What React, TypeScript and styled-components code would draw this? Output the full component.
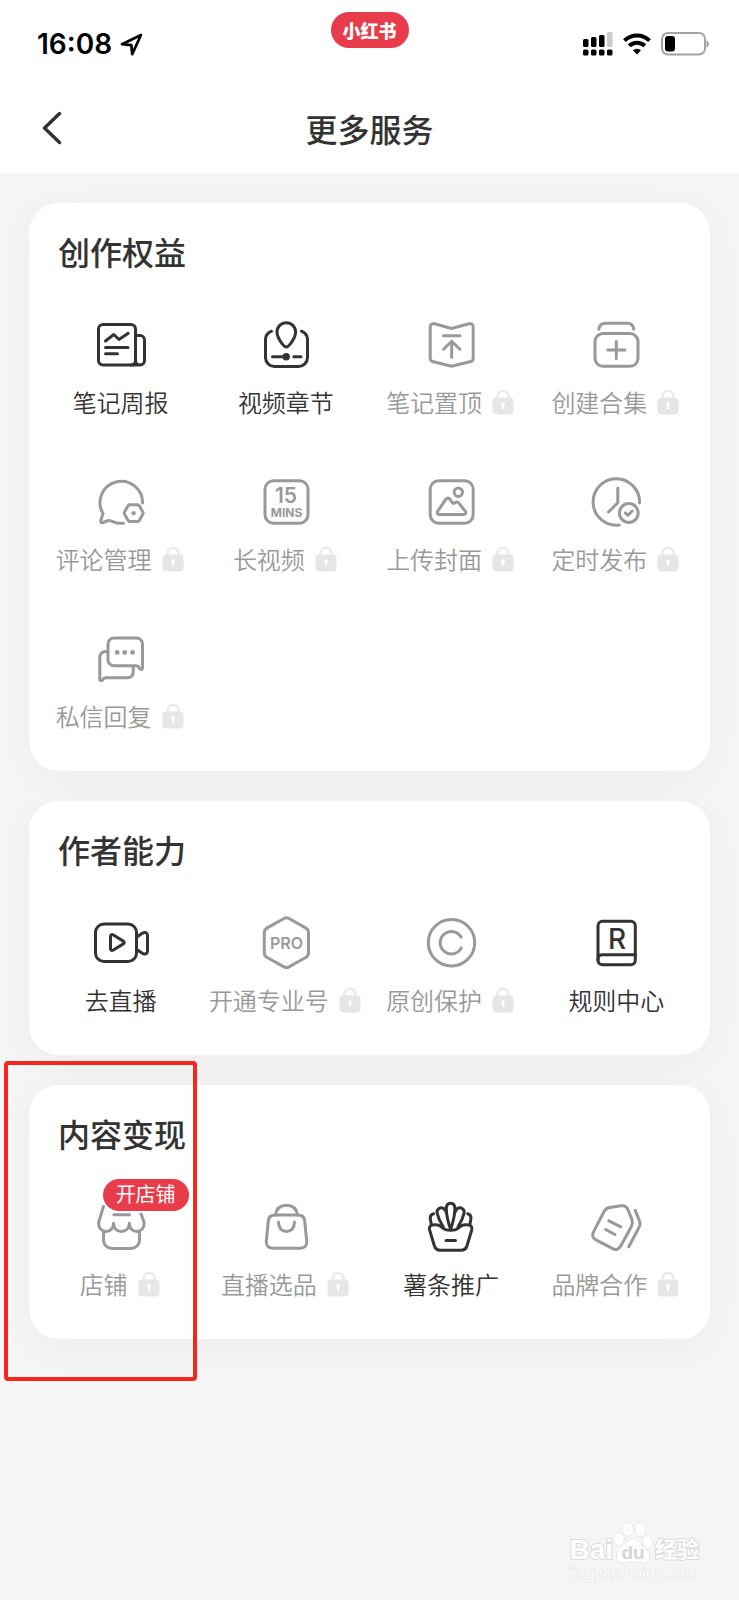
import React from "react";
import styled, { createGlobalStyle } from "styled-components";

const INK = "#333333";
const MUTED = "#999999";
const RED = "#e83c4a";

const GlobalStyle = createGlobalStyle`
  *, *::before, *::after { box-sizing: border-box; }
  body {
    margin: 0;
    background: #f5f5f5;
    color: ${INK};
    font-family: "Noto Sans CJK SC", "Noto Sans", sans-serif;
  }
`;

const Page = styled.div`
  display: flex;
  flex-direction: column;
  min-height: 100vh;
  overflow: hidden;
`;

const Header = styled.header`
  position: relative;
  z-index: 1;
  background: #ffffff;
`;

const StatusBar = styled.div`
  display: grid;
  grid-template-columns: 1fr auto 1fr;
  align-items: center;
  height: 86px;
  padding: 2px 30px 0;
`;

const Clock = styled.div`
  display: flex;
  align-items: center;
  gap: 8px;
  padding-left: 7px;
  color: #000000;
  font-family: Inter, "Liberation Sans", sans-serif;
  font-size: 28px;
  font-weight: 600;
  line-height: 32px;
`;

const BrandPill = styled.div`
  align-self: start;
  height: 36px;
  margin-top: 10px;
  padding: 0 12px;
  border-radius: 18px;
  background: ${RED};
  color: #ffffff;
  font-size: 18px;
  font-weight: 900;
  line-height: 36px;
`;

const Indicators = styled.div`
  display: flex;
  align-items: center;
  justify-content: flex-end;
  gap: 10px;
`;

const NavBar = styled.nav`
  display: grid;
  grid-template-columns: 1fr auto 1fr;
  align-items: center;
  height: 87px;
  padding: 0 38px 4px;
`;

const BackButton = styled.button`
  display: flex;
  justify-self: start;
  padding: 0;
  border: 0;
  background: none;
  color: ${INK};
  cursor: pointer;
`;

const PageTitle = styled.h1`
  margin: 0;
  font-size: 32px;
  font-weight: 500;
  line-height: 40px;
`;

const Main = styled.main`
  display: flex;
  flex-direction: column;
  gap: 30px;
  padding: 30px 29px;
`;

const Card = styled.section`
  position: relative;
  padding: 28px 11px 41px 9px;
  border-radius: 30px;
  background: #ffffff;
  box-shadow: 0 8px 40px rgba(0, 0, 0, 0.04);
`;

const CardTitle = styled.h2`
  margin: 0 0 46px;
  padding: 0 20px;
  font-size: 32px;
  font-weight: 500;
  line-height: 40px;
`;

const ServiceGrid = styled.div`
  display: grid;
  grid-template-columns: repeat(4, minmax(0, 1fr));
  row-gap: 58px;
`;

const ServiceButton = styled.button<{ $locked: boolean }>`
  display: flex;
  flex-direction: column;
  align-items: center;
  gap: 15px;
  padding: 0;
  border: 0;
  background: none;
  color: ${(p) => (p.$locked ? MUTED : INK)};
  font-family: inherit;
  cursor: pointer;
`;

const IconBox = styled.span`
  position: relative;
  display: block;
  width: 56px;
  height: 56px;
`;

const Badge = styled.span`
  position: absolute;
  top: -20px;
  left: 10px;
  height: 32px;
  padding: 0 13px;
  border-radius: 16px;
  background: ${RED};
  box-shadow: 0 0 0 2px #ffffff;
  color: #ffffff;
  font-size: 20px;
  line-height: 30px;
  white-space: nowrap;
`;

const Label = styled.span`
  display: flex;
  align-items: center;
  gap: 10px;
  font-size: 24px;
  font-weight: 350;
  line-height: 28px;
  white-space: nowrap;
`;

const LockIcon = styled.svg`
  display: block;
  margin-right: 2px;
`;

const Highlight = styled.div`
  position: absolute;
  top: -24px;
  left: -25px;
  width: 193px;
  height: 320px;
  border: 4px solid #f3271c;
  border-radius: 4px;
  pointer-events: none;
`;

const Footer = styled.footer`
  display: flex;
  justify-content: flex-end;
  margin-top: auto;
  padding: 0 40px 16px;
`;

const Watermark = styled.div`
  display: flex;
  flex-direction: column;
  color: #fdfdfd;
  font-family: "Liberation Sans", "Noto Sans CJK SC", sans-serif;
  -webkit-text-stroke: 2px #dcdcdc;
  paint-order: stroke fill;
`;

const WatermarkLogo = styled.div`
  display: flex;
  align-items: flex-end;
  font-size: 28px;
  font-weight: 700;
  line-height: 28px;
`;

const WatermarkName = styled.span`
  margin-left: 2px;
  font-size: 22px;
  line-height: 28px;
`;

const WatermarkUrl = styled.span`
  font-size: 16px;
  line-height: 20px;
  -webkit-text-stroke: 1px #e2e2e2;
`;

const WatermarkPaw = styled.svg`
  display: block;
  -webkit-text-stroke: 0;
`;

const Svg = styled.svg`
  display: block;
  overflow: visible;
  fill: none;
  stroke: currentColor;
  stroke-linecap: round;
  stroke-linejoin: round;
`;

const Glyph = styled.text`
  fill: currentColor;
  stroke: none;
  font-family: Inter, "Liberation Sans", sans-serif;
  text-anchor: middle;
`;

const icons: Record<string, React.ReactNode> = {
  report: (
    <>
      <rect x="5.5" y="7.5" width="37" height="40.5" rx="4.5" />
      <path d="M42.5 18.5H47a4.5 4.5 0 0 1 4.5 4.5v20.5a4.5 4.5 0 0 1-9 0M38 48h9" />
      <path d="M12.5 24l8.3-6.5 5.2 5 9.2-6.2M12.5 30.5h22.5M12.5 36.8h12" />
    </>
  ),
  chapter: (
    <>
      <path d="M13.5 14.2c-4 1.800-6 4.600-6 8.300v18a9 9 0 0 0 9 9h24a9 9 0 0 0 9-9v-18c0-3.700-2-6.500-6-8.300" />
      <path d="M28.300 30c-2.300 0-9.300-8.800-9.300-15a9.300 9.300 0 0 1 18.600 0c0 6.200-7 15-9.300 15z" />
      <path d="M14.5 39.8h10.5M35.8 39.8h7.200" />
      <circle cx="28.200" cy="39.800" r="3.700" fill="currentColor" stroke="none" />
    </>
  ),
  pin: (
    <>
      <path d="M11.5 6.800L28.500 11.500 46 6.800c2.300-.6 4.200.8 4.200 3.200v31.500c0 1.700-.7 2.500-2.300 3L28.500 49.300 9.500 44.500c-1.600-.5-2.300-1.300-2.300-3V10c0-2.400 2-3.800 4.300-3.200z" />
      <path d="M20.5 18.8h16.5M28.700 24v16.200M20.5 32.200l8.200-8 8.200 8" />
    </>
  ),
  collection: (
    <>
      <rect x="7" y="16.500" width="43" height="32.800" rx="8" />
      <path d="M10.8 12.300c.6-3.800 2.800-6 6.500-6h22c3.700 0 5.900 2.200 6.500 6M28.300 24.500v17M19.800 33h17" />
    </>
  ),
  comment: (
    <>
      <path d="M49.600 29A21.300 21.300 0 1 0 10 39.500L7.900 46c-.6 2.200.6 3.100 2.300 2.500l3.600-1.500c2-.8 3.200-.6 5.200.3 3.600 1.700 7 2.300 11.500 2" />
      <path d="M36.800 30.700h7.800a2 2 0 0 1 1.700 1l3.500 6.200a2.500 2.500 0 0 1 0 2.400l-3.500 6.200a2 2 0 0 1-1.700 1h-7.800a2 2 0 0 1-1.700-1l-3.500-6.200a2.500 2.500 0 0 1 0-2.400l3.500-6.200a2 2 0 0 1 1.700-1z" />
      <circle cx="40.600" cy="39.100" r="2.200" fill="currentColor" stroke="none" />
    </>
  ),
  minutes: (
    <>
      <rect x="7" y="6.800" width="43" height="42.500" rx="8.500" />
      <Glyph x="28" y="29" fontSize="21" fontWeight="600">15</Glyph>
      <Glyph x="28.500" y="43" fontSize="12" fontWeight="700">MINS</Glyph>
    </>
  ),
  cover: (
    <>
      <rect x="7.200" y="6.800" width="43" height="42.500" rx="8.500" />
      <circle cx="35.300" cy="18.300" r="4.200" />
      <path d="M16.500 40.400c-2 0-2.800-1.500-1.800-3.200l8.200-12c1.200-1.500 2.800-1.500 4-.1l2.400 3.600c.7 1 1.500 1 2.400.2 1.800-1.300 3.400-.9 4.400.5l6.300 8c1 1.600.2 3-1.700 3z" />
    </>
  ),
  schedule: (
    <>
      <path d="M51.500 29A23.200 23.200 0 1 0 31.300 51" />
      <path d="M29.800 14v14.700L20.500 38" />
      <circle cx="40.800" cy="39" r="9.400" />
      <path d="M37.300 38.800l2.700 2.500 4.300-4.300" />
    </>
  ),
  reply: (
    <>
      <path d="M21 7h22.500a6 6 0 0 1 6 6v24c0 1.700-1.700 2-2.600.8l-1.300-1.900c-.7-.9-1.300-1.200-2.400-1.200H21a6 6 0 0 1-6-6V13a6 6 0 0 1 6-6z" />
      <path d="M14 20.500h-.5c-4.300 0-6.700 2.500-6.700 6.500v21c0 1.900 1.500 2.300 2.700 1l.9-1.200c.7-.8 1.200-1.100 2.300-1.100h21.500c4 0 6-2 6-6v-4.500" />
      <g fill="currentColor" stroke="none">
        <circle cx="24.200" cy="21.400" r="2.400" />
        <circle cx="31.800" cy="21.400" r="2.400" />
        <circle cx="39.500" cy="21.400" r="2.400" />
      </g>
    </>
  ),
  live: (
    <>
      <rect x="2.500" y="9" width="41" height="37.500" rx="8.500" />
      <path d="M44.500 21.500l4.800-3.300c2.500-1.500 5.200-.5 5.200 2.300v15.500c0 2.800-2.700 3.800-5.200 2.300l-4.800-3.300" />
      <path d="M17.500 21.300c0-1.500 1.200-2.200 2.500-1.500l10.300 6.300c1.200.8 1.200 2 0 2.800L20 35.200c-1.300.7-2.500 0-2.500-1.500z" />
    </>
  ),
  pro: (
    <>
      <path d="M26 3.500c1.600-.9 3.400-.9 5 0l16.600 9.400c1.900 1.100 2.900 2.700 2.900 4.800v20c0 2.100-1 3.700-2.900 4.800L31 51.900c-1.600.9-3.400.9-5 0L9.200 42.500c-1.900-1.100-2.900-2.700-2.900-4.800v-20c0-2.100 1-3.700 2.900-4.800z" />
      <Glyph x="28.500" y="34" fontSize="16" fontWeight="600">PRO</Glyph>
    </>
  ),
  copyright: (
    <>
      <circle cx="28.500" cy="27.700" r="23.200" />
      <path d="M38.200 22.300a11.200 11.200 0 1 0 0 10.800" />
    </>
  ),
  rules: (
    <>
      <rect x="10" y="6.300" width="37.300" height="43.400" rx="4.500" />
      <path d="M10 45v-1c0-2.800 1.500-4.300 4.300-4.300h33" />
      <Glyph x="29" y="34" fontSize="28" fontWeight="500">R</Glyph>
    </>
  ),
  shop: (
    <>
      <path d="M12 6.500h33L51.200 23.500c0 5.500-3 8.900-7.400 8.900-4.500 0-7.500-3.300-7.500-8.200 0 4.900-3.300 8.200-7.900 8.200s-7.900-3.300-7.900-8.200c0 4.900-3 8.200-7.500 8.200-4.400 0-7.700-3.400-7.400-8.900L10.500 7.500M20.800 15.700h15.700" />
      <path d="M10.500 32.500v8.500a8.500 8.500 0 0 0 8.500 8.500h19a8.500 8.500 0 0 0 8.500-8.500v-8.500" />
    </>
  ),
  bag: (
    <>
      <path d="M17 16h23c4 0 6.300 2 6.700 6l2 20c.4 4.500-2 7.300-6.500 7.300H14.800c-4.500 0-6.900-2.800-6.500-7.300l2-20c.4-4 2.700-6 6.700-6z" />
      <path d="M17.500 16c1-6.500 5-9.800 11-9.800s10 3.300 11 9.800M20.500 23c.3 6 3 9.400 8 9.400s7.700-3.400 8-9.400" />
    </>
  ),
  fries: (
    <>
      <path d="M9.500 26c4.200-.8 7.200-.3 9.300 2.200 2.200 2.300 5 3.100 8.800 3.100s6.600-.8 8.800-3.100c2.100-2.500 5.100-3 9.300-2.200 2.700.5 3.700 2.400 3 5l-4.600 15.500c-1 3.300-3 4.800-6.300 4.800H17.600c-3.300 0-5.300-1.500-6.300-4.800L6.600 31c-.7-2.600.2-4.500 2.900-5z" />
      <path d="M27.600 30.500c-2-6-4.300-14-4.300-20.500 0-3.800 1.700-5.700 4.300-5.700s4.300 1.900 4.300 5.700c0 6.500-2.300 14.500-4.300 20.500z" />
      <path d="M23.600 14c-.8-2.500-1.700-3.800-3-4.600-3.500-1.600-7.300.8-6.500 4.600 1 4.600 3.300 9.600 6.200 14M31.600 14c.8-2.500 1.700-3.800 3-4.600 3.500-1.600 7.300.8 6.500 4.600-1 4.600-3.300 9.600-6.200 14" />
      <path d="M10.500 14.800c-2.600.7-3.500 2.400-3.200 5l.9 5M44.700 14.800c2.600.7 3.500 2.400 3.200 5l-.9 5M23 41.500h9.500" />
    </>
  ),
  partner: (
    <>
      <path d="M20.500 8.800l12.500-2c3.500-.5 5.700.7 7 4l4 10c.8 2.400.6 4.500-.6 6.700L33 46.500c-2.200 4-5 5-8.800 2.900L8.400 41.200c-4-2.200-4.800-5-2.700-8.800l10-19.100c1.100-2.200 2.500-4 4.800-4.500z" />
      <path d="M20.800 21.800l12 6M17.700 30.500l9.200 5M47.200 11.300l4.500 11.200c.7 1.700.6 3.200-.2 4.800L40.800 47.700" />
    </>
  ),
};

function Lock() {
  return (
    <LockIcon width="22" height="26" viewBox="0 0 22 26" fill="none" aria-label="未解锁" role="img">
      <path d="M5.500 10V7.200a5.500 5.500 0 0 1 11 0V10" stroke="#ebebeb" strokeWidth="2.500" />
      <rect x="0.500" y="8.500" width="21" height="17" rx="4" fill="#e6e6e6" />
      <path d="M11 13.200a2 2 0 0 1 1 3.700v3.100h-2v-3.100a2 2 0 0 1 1-3.700z" fill="#ffffff" />
    </LockIcon>
  );
}

interface Service {
  icon: string;
  name: string;
  locked?: boolean;
  badge?: string;
}

interface Section {
  title: string;
  services: Service[];
  highlighted?: boolean;
}

const sections: Section[] = [
  {
    title: "创作权益",
    services: [
      { icon: "report", name: "笔记周报" },
      { icon: "chapter", name: "视频章节" },
      { icon: "pin", name: "笔记置顶", locked: true },
      { icon: "collection", name: "创建合集", locked: true },
      { icon: "comment", name: "评论管理", locked: true },
      { icon: "minutes", name: "长视频", locked: true },
      { icon: "cover", name: "上传封面", locked: true },
      { icon: "schedule", name: "定时发布", locked: true },
      { icon: "reply", name: "私信回复", locked: true },
    ],
  },
  {
    title: "作者能力",
    services: [
      { icon: "live", name: "去直播" },
      { icon: "pro", name: "开通专业号", locked: true },
      { icon: "copyright", name: "原创保护", locked: true },
      { icon: "rules", name: "规则中心" },
    ],
  },
  {
    title: "内容变现",
    highlighted: true,
    services: [
      { icon: "shop", name: "店铺", locked: true, badge: "开店铺" },
      { icon: "bag", name: "直播选品", locked: true },
      { icon: "fries", name: "薯条推广" },
      { icon: "partner", name: "品牌合作", locked: true },
    ],
  },
];

function ServiceItem({ icon, name, locked = false, badge }: Service) {
  return (
    <ServiceButton type="button" $locked={locked}>
      <IconBox>
        <Svg width="56" height="56" viewBox="0 0 56 56" strokeWidth="3" aria-hidden="true">
          {icons[icon]}
        </Svg>
        {badge && <Badge>{badge}</Badge>}
      </IconBox>
      <Label>
        {name}
        {locked && <Lock />}
      </Label>
    </ServiceButton>
  );
}

function StatusIcons() {
  return (
    <Indicators>
      <svg width="30" height="24" viewBox="0 0 30 24" aria-label="信号" role="img">
        <rect x="0" y="7" width="5.500" height="8" rx="1.500" />
        <rect x="8" y="5" width="5.500" height="10" rx="1.500" />
        <rect x="16" y="3" width="5.500" height="12" rx="1.500" />
        <rect x="24" y="0" width="5.500" height="15" rx="1.500" fill="#cccccc" />
        <rect x="0" y="17.500" width="5.500" height="6" rx="1.500" />
        <rect x="8" y="17.500" width="5.500" height="6" rx="1.500" />
        <rect x="16" y="17.500" width="5.500" height="6" rx="1.500" />
        <rect x="24" y="17.500" width="5.500" height="6" rx="1.500" />
      </svg>
      <svg width="28" height="22" viewBox="0 0 28 22" fill="none" stroke="#000000" strokeWidth="4" aria-label="无线网络" role="img">
        <path d="M1.500 7.700a17.800 17.800 0 0 1 25 0" />
        <path d="M6.200 12.800a11.200 11.200 0 0 1 15.600 0" />
        <path d="M14 21.500l-4-4.200a5.800 5.800 0 0 1 8 0z" fill="#000000" stroke="none" />
      </svg>
      <svg width="48" height="24" viewBox="0 0 48 24" aria-label="电量" role="img">
        <rect x="1" y="1" width="43" height="21.500" rx="6" fill="none" stroke="#a3a3a3" strokeWidth="2" />
        <rect x="4" y="4" width="10" height="15.500" rx="3" />
        <path d="M45.500 8.500c3.200 1 3.200 6 0 7z" fill="#a3a3a3" />
      </svg>
    </Indicators>
  );
}

export default function App() {
  return (
    <>
      <GlobalStyle />
      <Page>
        <Header>
          <StatusBar>
            <Clock>
              16:08
              <Svg width="23" height="23" viewBox="0 0 23 23" strokeWidth="2.700" aria-hidden="true">
                <path d="M21 2L2 11.200l9.300.9.900 9z" />
              </Svg>
            </Clock>
            <BrandPill>小红书</BrandPill>
            <StatusIcons />
          </StatusBar>
          <NavBar>
            <BackButton type="button" aria-label="返回">
              <Svg width="26" height="36" viewBox="0 0 26 36" strokeWidth="3.500" aria-hidden="true">
                <path d="M21.500 3.500L6.500 18l15 14.500" />
              </Svg>
            </BackButton>
            <PageTitle>更多服务</PageTitle>
          </NavBar>
        </Header>
        <Main>
          {sections.map((section) => (
            <Card key={section.title}>
              <CardTitle>{section.title}</CardTitle>
              <ServiceGrid>
                {section.services.map((service) => (
                  <ServiceItem key={service.name} {...service} />
                ))}
              </ServiceGrid>
              {section.highlighted && <Highlight />}
            </Card>
          ))}
        </Main>
        <Footer>
          <Watermark>
            <WatermarkLogo>
              Bai
              <WatermarkPaw width="40" height="44" viewBox="0 0 40 44" fill="#fdfdfd" stroke="#d8d8d8" strokeWidth="1">
                <ellipse cx="6" cy="19" rx="5" ry="6.500" />
                <ellipse cx="15" cy="9" rx="5" ry="7" />
                <ellipse cx="27" cy="9.500" rx="5" ry="7" />
                <ellipse cx="34.500" cy="22" rx="5" ry="6.500" />
                <path d="M20 19c5 0 7 4 10 7.500 3 3 6.500 5 6.500 9.500 0 5-4 7.500-8.500 6.500-5-1-10-1-15 0C8 43.500 3.500 41 3.500 36c0-4.500 3-6.500 6-9.500C13 23 15 19 20 19z" />
                <text x="20" y="39" fontSize="19" fontWeight="700" textAnchor="middle" fill="#d6d6d6" stroke="none">du</text>
              </WatermarkPaw>
              <WatermarkName>经验</WatermarkName>
            </WatermarkLogo>
            <WatermarkUrl>jingyan.baidu.com</WatermarkUrl>
          </Watermark>
        </Footer>
      </Page>
    </>
  );
}
